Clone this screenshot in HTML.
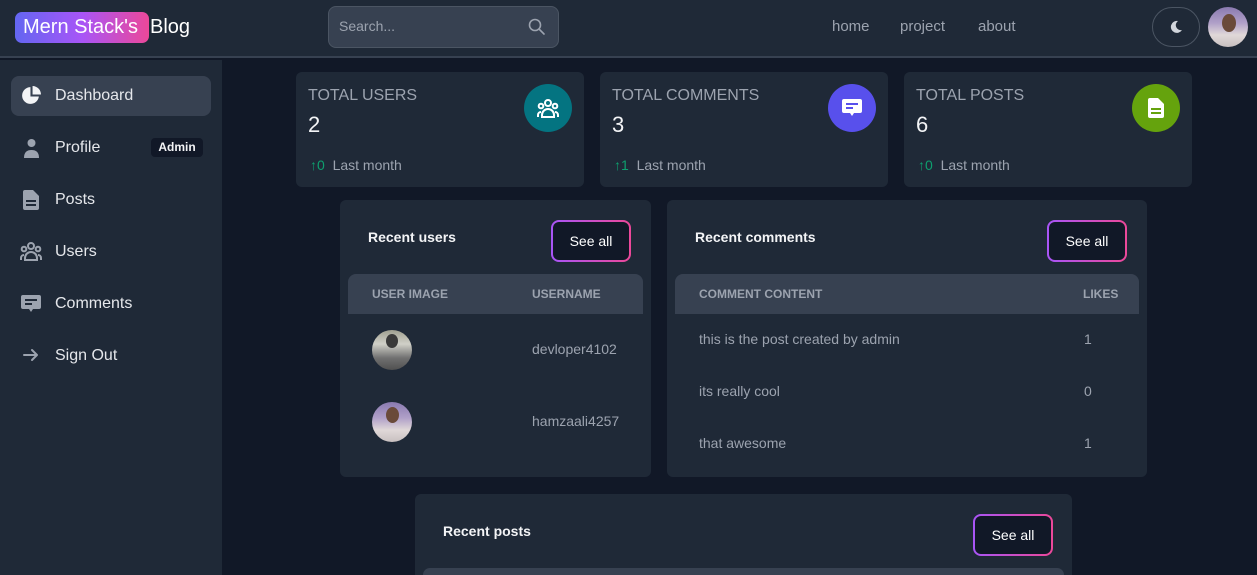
<!DOCTYPE html>
<html><head><meta charset="utf-8"><style>
*{box-sizing:border-box;margin:0;padding:0}
html{width:1257px;height:575px;overflow:hidden}
body{width:1257px;height:575px;overflow:hidden;background:#111827;font-family:"Liberation Sans",sans-serif;color:#e5e7eb;position:relative}
.a{position:absolute}
.hdr{left:0;top:0;width:1257px;height:58px;background:#1f2937;border-bottom:2px solid #374151}
.side{left:0;top:60px;width:222px;height:515px;background:#1f2937}
.card{background:#1f2937;border-radius:6px}
.nav{font-size:16px;color:#e5e7eb}
.ic{fill:#9ca3af}
.st{font-size:16px;color:#9ca3af}
.num{font-size:22px;color:#f3f4f6}
.lm{font-size:14px;color:#9ca3af}
.grn{color:#0e9f6e}
.circ{width:48px;height:48px;border-radius:50%;display:flex;align-items:center;justify-content:center}
.btn{border-radius:8px;padding:2px;background:linear-gradient(90deg,#a855f7,#ec4899)}
.btn div{background:#111827;border-radius:6px;width:100%;height:100%;display:flex;align-items:center;justify-content:center;font-size:14px;color:#fff}
.th{background:#374151;border-radius:8px 8px 0 0;font-size:12px;font-weight:bold;color:#9ca3af}
.td{font-size:14px;color:#9ca3af}
.h3{font-size:14px;font-weight:bold;color:#f3f4f6}
</style></head><body>
<div class="a hdr"></div>
<div class="a" style="left:15px;top:12px;height:31px;width:134px;border-radius:7px;background:linear-gradient(90deg,#6366f1,#a855f7,#ec4899)"></div>
<div class="a" style="left:23px;top:16px;font-size:20px;color:#fff">Mern Stack's</div>
<div class="a" style="left:150px;top:16px;font-size:20px;color:#fff">Blog</div>
<div class="a" style="left:328px;top:6px;width:231px;height:42px;background:#374151;border:1px solid #4b5563;border-radius:8px"></div>
<div class="a" style="left:339px;top:18px;font-size:14px;color:#9ca3af">Search...</div>
<svg class="a" style="left:527px;top:17px" width="20" height="20" viewBox="0 0 20 20"><circle cx="8" cy="8" r="5.5" fill="none" stroke="#9ca3af" stroke-width="1.6"/><path d="M12 12l5 5" stroke="#9ca3af" stroke-width="1.6" stroke-linecap="round"/></svg>
<div class="a" style="left:832px;top:18px;font-size:15px;color:#9ca3af">home</div>
<div class="a" style="left:900px;top:18px;font-size:15px;color:#9ca3af">project</div>
<div class="a" style="left:978px;top:18px;font-size:15px;color:#9ca3af">about</div>
<div class="a" style="left:1152px;top:7px;width:48px;height:40px;border:1px solid #4b5563;border-radius:20px"></div>
<svg class="a" style="left:1170px;top:20px" width="13" height="14" viewBox="0 0 13 14"><path d="M8 1a6 6 0 1 0 4 9A5 5 0 0 1 8 1z" fill="#d1d5db"/></svg>
<div class="a" style="left:1208px;top:7px;width:40px;height:40px;border-radius:50%;background:linear-gradient(180deg,#8a7ab0 0%,#b0a0c8 40%,#e0d8d8 70%,#c8c0c0 100%)"></div>
<div class="a" style="left:1222px;top:14px;width:14px;height:18px;border-radius:50%;background:#6a4a3a"></div>

<div class="a side"></div>
<div class="a" style="left:11px;top:76px;width:200px;height:40px;background:#374151;border-radius:8px"></div>
<svg class="a" style="left:21px;top:85px" width="21" height="21" viewBox="0 0 20 20"><path d="M9 2a8 8 0 1 0 8 9H9z" fill="#f3f4f6"/><path d="M11 1a8 8 0 0 1 8 8h-8z" fill="#f3f4f6"/></svg>
<div class="a nav" style="left:55px;top:87px">Dashboard</div>
<svg class="a" style="left:22px;top:138px" width="19" height="20" viewBox="0 0 19 20"><circle cx="9.5" cy="5" r="4" class="ic"/><path d="M2 20c0-6 3-8 7.5-8S17 14 17 20z" class="ic"/></svg>
<div class="a nav" style="left:55px;top:139px">Profile</div>
<div class="a" style="left:151px;top:138px;width:52px;height:19px;background:#111827;border-radius:4px;font-size:12px;font-weight:bold;color:#f3f4f6;text-align:center;line-height:19px">Admin</div>
<svg class="a" style="left:23px;top:190px" width="16" height="20" viewBox="0 0 16 20"><path d="M2 0h8l6 6v12a2 2 0 0 1-2 2H2a2 2 0 0 1-2-2V2a2 2 0 0 1 2-2z" class="ic"/><rect x="3" y="10" width="10" height="2" fill="#1f2937"/><rect x="3" y="14" width="10" height="2" fill="#1f2937"/></svg>
<div class="a nav" style="left:55px;top:191px">Posts</div>
<svg class="a" style="left:20px;top:242px" width="22" height="19" viewBox="0 0 22 19"><g fill="none" stroke="#9ca3af" stroke-width="2"><circle cx="11" cy="4" r="3"/><circle cx="4" cy="7" r="2.3"/><circle cx="18" cy="7" r="2.3"/><path d="M5 18v-2a6 6 0 0 1 12 0v2zM1 18v-2a3 3 0 0 1 3-3M21 18v-2a3 3 0 0 0-3-3"/></g></svg>
<div class="a nav" style="left:55px;top:243px">Users</div>
<svg class="a" style="left:21px;top:294px" width="20" height="20" viewBox="0 0 20 20"><path d="M2 1h16a2 2 0 0 1 2 2v10a2 2 0 0 1-2 2h-6l-2 3-2-3H2a2 2 0 0 1-2-2V3a2 2 0 0 1 2-2z" class="ic"/><rect x="4" y="5" width="12" height="2" fill="#1f2937"/><rect x="4" y="9" width="7" height="2" fill="#1f2937"/></svg>
<div class="a nav" style="left:55px;top:295px">Comments</div>
<svg class="a" style="left:23px;top:347px" width="16" height="16" viewBox="0 0 16 16"><path d="M1 8h13M9 3l5 5-5 5" fill="none" stroke="#9ca3af" stroke-width="2" stroke-linecap="round" stroke-linejoin="round"/></svg>
<div class="a nav" style="left:55px;top:347px">Sign Out</div>

<div class="a card" style="left:296px;top:72px;width:288px;height:115px"></div>
<div class="a card" style="left:600px;top:72px;width:288px;height:115px"></div>
<div class="a card" style="left:904px;top:72px;width:288px;height:115px"></div>
<div class="a st" style="left:308px;top:87px">TOTAL USERS</div>
<div class="a num" style="left:308px;top:112px">2</div>
<div class="a lm" style="left:310px;top:157px"><span class="grn">↑0</span>&nbsp;&nbsp;Last month</div>
<div class="a circ" style="left:524px;top:84px;background:#047481"><svg width="22" height="19" viewBox="0 0 22 19"><g fill="none" stroke="#fff" stroke-width="2"><circle cx="11" cy="4" r="3"/><circle cx="4" cy="7" r="2.3"/><circle cx="18" cy="7" r="2.3"/><path d="M5 18v-2a6 6 0 0 1 12 0v2zM1 18v-2a3 3 0 0 1 3-3M21 18v-2a3 3 0 0 0-3-3"/></g></svg></div>
<div class="a st" style="left:612px;top:87px">TOTAL COMMENTS</div>
<div class="a num" style="left:612px;top:112px">3</div>
<div class="a lm" style="left:614px;top:157px"><span class="grn">↑1</span>&nbsp;&nbsp;Last month</div>
<div class="a circ" style="left:828px;top:84px;background:#5850ec"><svg width="20" height="20" viewBox="0 0 20 20"><path d="M2 1h16a2 2 0 0 1 2 2v10a2 2 0 0 1-2 2h-6l-2 3-2-3H2a2 2 0 0 1-2-2V3a2 2 0 0 1 2-2z" fill="#fff"/><rect x="4" y="5" width="12" height="2" fill="#5850ec"/><rect x="4" y="9" width="7" height="2" fill="#5850ec"/></svg></div>
<div class="a st" style="left:916px;top:87px">TOTAL POSTS</div>
<div class="a num" style="left:916px;top:112px">6</div>
<div class="a lm" style="left:918px;top:157px"><span class="grn">↑0</span>&nbsp;&nbsp;Last month</div>
<div class="a circ" style="left:1132px;top:84px;background:#65a30d"><svg width="16" height="20" viewBox="0 0 16 20"><path d="M2 0h8l6 6v12a2 2 0 0 1-2 2H2a2 2 0 0 1-2-2V2a2 2 0 0 1 2-2z" fill="#fff"/><rect x="3" y="10" width="10" height="2" fill="#65a30d"/><rect x="3" y="14" width="10" height="2" fill="#65a30d"/></svg></div>

<div class="a card" style="left:340px;top:200px;width:311px;height:277px"></div>
<div class="a h3" style="left:368px;top:229px">Recent users</div>
<div class="a btn" style="left:551px;top:220px;width:80px;height:42px"><div>See all</div></div>
<div class="a th" style="left:348px;top:274px;width:295px;height:40px"></div>
<div class="a th" style="left:372px;top:287px;background:none">USER IMAGE</div>
<div class="a th" style="left:532px;top:287px;background:none">USERNAME</div>
<div class="a" style="left:372px;top:330px;width:40px;height:40px;border-radius:50%;background:linear-gradient(180deg,#a0a090 0%,#d0d0c8 35%,#707070 70%,#505050 100%)"></div>
<div class="a" style="left:386px;top:334px;width:12px;height:14px;border-radius:50%;background:#3a3a3a"></div>
<div class="a td" style="left:532px;top:341px">devloper4102</div>
<div class="a" style="left:372px;top:402px;width:40px;height:40px;border-radius:50%;background:linear-gradient(180deg,#8a7ab0 0%,#b0a0c8 40%,#e0d8d8 70%,#c8c0c0 100%)"></div>
<div class="a" style="left:386px;top:407px;width:13px;height:16px;border-radius:50%;background:#6a4a3a"></div>
<div class="a td" style="left:532px;top:413px">hamzaali4257</div>

<div class="a card" style="left:667px;top:200px;width:480px;height:277px"></div>
<div class="a h3" style="left:695px;top:229px">Recent comments</div>
<div class="a btn" style="left:1047px;top:220px;width:80px;height:42px"><div>See all</div></div>
<div class="a th" style="left:675px;top:274px;width:464px;height:40px"></div>
<div class="a th" style="left:699px;top:287px;background:none">COMMENT CONTENT</div>
<div class="a th" style="left:1083px;top:287px;background:none">LIKES</div>
<div class="a td" style="left:699px;top:331px">this is the post created by admin</div>
<div class="a td" style="left:1084px;top:331px">1</div>
<div class="a td" style="left:699px;top:383px">its really cool</div>
<div class="a td" style="left:1084px;top:383px">0</div>
<div class="a td" style="left:699px;top:435px">that awesome</div>
<div class="a td" style="left:1084px;top:435px">1</div>

<div class="a card" style="left:415px;top:494px;width:657px;height:81px;border-radius:6px 6px 0 0"></div>
<div class="a h3" style="left:443px;top:523px">Recent posts</div>
<div class="a btn" style="left:973px;top:514px;width:80px;height:42px"><div>See all</div></div>
<div class="a th" style="left:423px;top:568px;width:641px;height:7px"></div>
</body></html>
